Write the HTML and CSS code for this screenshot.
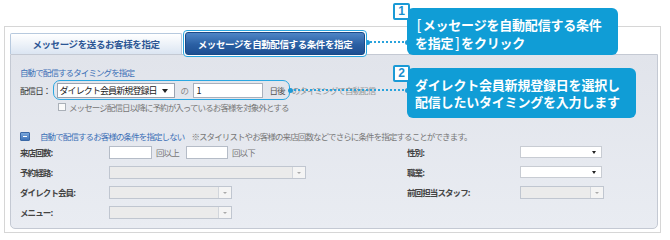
FILE: index.html
```html
<!DOCTYPE html>
<html lang="ja">
<head>
<meta charset="utf-8">
<link rel="stylesheet" href="styles.css">
</head>
<body>
<div class="frame">
  <div class="tabs">
    <div class="tab">メッセージを送るお客様を指定</div>
    <div class="tab-active"><div class="tab-active-inner">メッセージを自動配信する条件を指定</div></div>
  </div>
  <div class="panel">
    <div class="heading">自動で配信するタイミングを指定</div>
    <div class="date-row">
      <span class="date-label">配信日：</span>
      <div class="hl">
        <span class="sel">ダイレクト会員新規登録日<span class="caret"></span></span>
        <span class="no">の</span>
        <span class="inp">1</span>
        <span class="unit">日後</span>
      </div>
      <span class="after">のタイミングで自動配信</span>
    </div>
    <div class="check-row"><span class="cb"></span><span class="check-text">メッセージ配信日以降に予約が入っているお客様を対象外とする</span></div>
    <div class="toggle-row">
      <span class="minus"></span>
      <span class="link">自動で配信するお客様の条件を指定しない</span>
      <span class="note">※スタイリストやお客様の来店回数などでさらに条件を指定することができます。</span>
    </div>
    <div class="grid">
      <span class="lbl">来店回数:</span>
      <span class="ctrl"><span class="box w43"></span><span class="suffix">回以上</span><span class="box w42"></span><span class="suffix">回以下</span></span>
      <span class="lbl">性別:</span>
      <span class="esel"></span>

      <span class="lbl">予約経路:</span>
      <span class="ctrl"><span class="dsel w197"></span></span>
      <span class="lbl">職業:</span>
      <span class="esel"></span>

      <span class="lbl">ダイレクト会員:</span>
      <span class="ctrl"><span class="dsel w123"></span></span>
      <span class="lbl">前回担当スタッフ:</span>
      <span class="dsel w84"></span>

      <span class="lbl">メニュー:</span>
      <span class="ctrl"><span class="dsel w123"></span></span>
    </div>
  </div>
</div>

<div class="conn conn1"></div>
<div class="conn conn2"></div>

<div class="num num1">1</div>
<div class="bubble bubble1"><span class="br">[</span>メッセージを自動配信する条件<br>を指定<span class="br">]</span>をクリック</div>

<div class="num num2">2</div>
<div class="bubble bubble2">ダイレクト会員新規登録日を選択し<br>配信したいタイミングを入力します</div>
</body>
</html>
```

FILE: styles.css
```css
* { box-sizing: border-box; }
html, body { margin: 0; padding: 0; }
body {
  width: 670px;
  height: 240px;
  overflow: hidden;
  position: relative;
  background: #fff;
  font-family: "Noto Sans CJK JP", "Noto Sans", sans-serif;
  font-size: 8.5px;
  letter-spacing: -0.9px;
  color: #444;
}

.frame {
  margin: 26px 0 0 4px;
  width: 657px;
  height: 207px;
  border: 1px solid #d6d6d6;
  padding: 3px 2px 3px 5px;
}

.tabs {
  display: flex;
  align-items: flex-end;
  height: 24px;
}
.tab {
  width: 172px;
  height: 21px;
  border: 1px solid #b7c9de;
  border-bottom: none;
  border-radius: 2px 2px 0 0;
  background: linear-gradient(#ffffff, #dbe5f2);
  color: #2c5694;
  font-weight: 700;
  font-size: 9.5px;
  letter-spacing: -0.4px;
  display: flex;
  align-items: center;
  justify-content: center;
}
.tab-active {
  margin-left: 1px;
  margin-bottom: -3px;
  position: relative;
  z-index: 1;
  width: 184px;
  height: 27px;
  border: 1.5px solid #2aa6df;
  border-radius: 4px;
  padding: 1px;
  background: #fff;
}
.tab-active-inner {
  height: 100%;
  border: 1px solid #1b4a88;
  border-radius: 3px;
  background: linear-gradient(#4f86c6, #2a5fa3 55%, #1e4f92);
  color: #fff;
  font-weight: 700;
  font-size: 9.5px;
  letter-spacing: -0.4px;
  display: flex;
  align-items: center;
  justify-content: center;
}

.panel {
  height: 175px;
  border: 1px solid #c4c9d3;
  border-radius: 0 0 5px 5px;
  background: linear-gradient(#e1e4eb, #e9ecf2);
  padding: 12px 0 0 9px;
}

.heading {
  height: 10px;
  line-height: 10px;
  color: #3b6fb6;
}

.date-row {
  margin-top: 3px;
  height: 20px;
  display: flex;
  align-items: center;
}
.date-label {
  width: 33px;
  color: #333;
}
.hl {
  height: 20px;
  display: flex;
  align-items: center;
  border: 1.5px solid #2aa7e1;
  border-radius: 7px;
  padding: 0 4px 0 2.5px;
}
.sel {
  position: relative;
  width: 118px;
  height: 15px;
  line-height: 13px;
  background: #fff;
  border: 1px solid #9aa3b0;
  padding-left: 2px;
  color: #222;
  font-size: 9px;
}
.caret {
  position: absolute;
  right: 6px;
  top: 5px;
  border-left: 3px solid transparent;
  border-right: 3px solid transparent;
  border-top: 4px solid #222;
}
.no {
  width: 18px;
  padding-left: 6px;
  color: #888;
}
.inp {
  width: 70px;
  height: 15px;
  line-height: 13px;
  background: #fff;
  border: 1px solid #a8b0bc;
  padding-left: 3px;
  color: #222;
  font-size: 9px;
}
.unit {
  margin-left: 7px;
  color: #555;
}
.after {
  margin-left: 2px;
  color: #999;
}

.check-row {
  margin-top: 2px;
  height: 10px;
  display: flex;
  align-items: center;
  padding-left: 38px;
}
.cb {
  width: 8px;
  height: 8px;
  border: 1px solid #aab0b8;
  background: #fafafa;
}
.check-text {
  margin-left: 3px;
  color: #777;
}

.toggle-row {
  margin-top: 19px;
  height: 10px;
  display: flex;
  align-items: center;
}
.minus {
  position: relative;
  width: 10px;
  height: 9px;
  border: 1px solid #3a68a6;
  border-radius: 1px;
  background: linear-gradient(#7ba8dc, #3e73b9);
}
.minus::after {
  content: "";
  position: absolute;
  left: 2px;
  right: 2px;
  top: 3px;
  height: 1px;
  background: #fff;
}
.link {
  margin-left: 10px;
  color: #3b6fb6;
}
.note {
  margin-left: 7px;
  color: #777;
}

.grid {
  margin-top: 1px;
  display: grid;
  grid-template-columns: 89px 298px 113px 90px;
  grid-auto-rows: 20px;
  align-items: center;
}
.lbl {
  font-weight: 700;
  color: #444;
}
.ctrl {
  display: flex;
  align-items: center;
}
.box {
  height: 13px;
  background: #fff;
  border: 1px solid #b5bcc7;
}
.w43 { width: 43px; }
.w42 { width: 42px; }
.suffix {
  width: 34px;
  padding-left: 4px;
  color: #777;
}
.dsel {
  position: relative;
  height: 13px;
  background: #ebebeb;
  border: 1px solid #c0c6d0;
}
.dsel::after {
  content: "";
  position: absolute;
  top: 0;
  right: 0;
  bottom: 0;
  width: 12px;
  border-left: 1px solid #d2d6dc;
  background: #f4f4f4;
}
.dsel::before {
  content: "";
  position: absolute;
  right: 4px;
  top: 5px;
  z-index: 1;
  border-left: 2px solid transparent;
  border-right: 2px solid transparent;
  border-top: 2px solid #aaa;
}
.w197 { width: 197px; }
.w123 { width: 123px; }
.w84 { width: 84px; }
.esel {
  position: relative;
  width: 82px;
  height: 12px;
  background: #fff;
  border: 1px solid #c8ccd3;
}
.esel::after {
  content: "";
  position: absolute;
  right: 5px;
  top: 4px;
  border-left: 2.5px solid transparent;
  border-right: 2.5px solid transparent;
  border-top: 3px solid #222;
}

/* callouts */
.conn {
  position: absolute;
  height: 0;
  border-top: 2px dotted #2aa3dc;
}
.conn::before, .conn::after {
  content: "";
  position: absolute;
  top: -3.5px;
  width: 5px;
  height: 5px;
  border-radius: 50%;
  background: #1f9ad6;
}
.conn::before { left: -2px; }
.conn::after { right: -2px; }
.conn1 { left: 367px; top: 41px; width: 41px; }
.conn2 { left: 290px; top: 89px; width: 118px; }

.num {
  position: absolute;
  z-index: 3;
  width: 17px;
  height: 17px;
  border: 2px solid #1a9ad6;
  border-radius: 2px;
  background: #fff;
  color: #1a8fcf;
  font-family: "Liberation Sans", "Noto Sans", sans-serif;
  font-weight: 700;
  font-size: 12px;
  letter-spacing: 0;
  line-height: 13px;
  text-align: center;
}
.num1 { left: 393px; top: 3px; }
.num2 { left: 393px; top: 65px; }

.bubble {
  position: absolute;
  z-index: 2;
  background: #109dd6;
  border-radius: 6px;
  color: #fff;
  font-weight: 700;
  font-size: 13px;
  letter-spacing: -0.2px;
  line-height: 17px;
  padding-left: 8px;
}
.br {
  font-family: "Liberation Sans", sans-serif;
  font-weight: 400;
  font-size: 14px;
  padding: 0 2px;
}
.bubble1 {
  left: 407px;
  top: 8px;
  width: 211px;
  height: 47px;
  padding-top: 8px;
}
.bubble2 {
  left: 407px;
  top: 68px;
  width: 229px;
  height: 50px;
  padding-top: 8px;
}
```
